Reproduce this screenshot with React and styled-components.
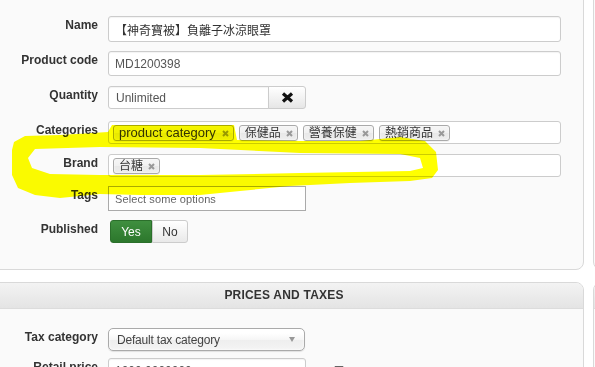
import React from "react";
import styled, { createGlobalStyle } from "styled-components";

const GlobalStyle = createGlobalStyle`
  body {
    margin: 0;
    background: #fff;
    overflow: hidden;
    font-family: "Liberation Sans", "Noto Sans CJK TC", Arial, sans-serif;
    color: #333;
  }
`;

const Screen = styled.div`
  position: relative;
  width: 595px;
  height: 367px;
  overflow: hidden;
`;

const Columns = styled.div`
  display: grid;
  grid-template-columns: 600px 300px;
  grid-template-rows: auto auto;
  column-gap: 9px;
  row-gap: 12px;
  margin-left: -16px;
  margin-top: -10px;
`;

const Panel = styled.section`
  box-sizing: border-box;
  background: #fafafa;
  border: 1px solid #d9d9d9;
  border-radius: 8px;
  padding: ${(p) => p.$pad || "0"};
`;

const PanelHeader = styled.header`
  height: 25px;
  line-height: 25px;
  border-radius: 7px 7px 0 0;
  border-bottom: 1px solid #dcdcdc;
  background: linear-gradient(#f3f3f3, #e4e4e4);
  text-align: center;
  font-size: 12px;
  font-weight: bold;
  letter-spacing: 0.2px;
  color: #333;
`;

const PanelBody = styled.div`
  padding: 19px 0 20px 0;
`;

const Row = styled.div`
  display: grid;
  grid-template-columns: 113px 1fr;
  column-gap: 10px;
  align-items: start;
  height: ${(p) => p.$h}px;
`;

const Label = styled.label`
  padding-top: 2px;
  text-align: right;
  font-size: 12px;
  line-height: 15px;
  font-weight: bold;
  color: #333;
`;

const TextBox = styled.div`
  box-sizing: border-box;
  display: flex;
  align-items: center;
  width: ${(p) => p.$w}px;
  height: ${(p) => p.$h || 25}px;
  padding: 0 6px;
  background: #fff;
  border: 1px solid ${(p) => (p.$square ? "#aaa" : "#ccc")};
  border-radius: ${(p) => (p.$square ? "0" : "3px")};
  box-shadow: ${(p) => (p.$square ? "none" : "inset 0 1px 1px rgba(0,0,0,0.05)")};
  font-size: 12px;
  color: ${(p) => (p.$muted ? "#555" : "#333")};
  white-space: nowrap;
`;

const Placeholder = styled.span`
  font-size: 11px;
  letter-spacing: 0.1px;
  color: #666;
`;

const Group = styled.div`
  display: flex;
  align-items: center;
`;

const GroupInput = styled(TextBox)`
  border-radius: 3px 0 0 3px;
  padding-left: 7px;
`;

const ClearButton = styled.button`
  box-sizing: border-box;
  width: 38px;
  height: 23px;
  display: flex;
  align-items: center;
  justify-content: center;
  padding: 0;
  margin-left: -1px;
  border: 1px solid #ccc;
  border-radius: 0 3px 3px 0;
  background: linear-gradient(#ffffff, #e6e6e6);
`;

const ChipBox = styled.div`
  box-sizing: border-box;
  display: flex;
  align-items: flex-start;
  gap: 5px;
  width: 453px;
  height: 23px;
  padding: 3px 4px;
  background: #fff;
  border: 1px solid #ccc;
  border-radius: 3px;
`;

const Chip = styled.span`
  box-sizing: border-box;
  display: inline-flex;
  align-items: center;
  gap: ${(p) => (p.$latin ? 6 : 5)}px;
  height: 16px;
  padding: 0 4px 0 5px;
  border: 1px solid #aaa;
  border-radius: 3px;
  background: linear-gradient(#f4f4f4 20%, #f0f0f0 50%, #e8e8e8 52%, #eeeeee);
  box-shadow: 0 0 2px #fff inset, 0 1px 0 rgba(0, 0, 0, 0.05);
  font-size: ${(p) => (p.$latin ? 13 : 12)}px;
  line-height: 14px;
  color: #333;
  white-space: nowrap;
`;

const Toggle = styled.div`
  display: flex;
  margin-left: 2px;
  height: 23px;
`;

const ToggleButton = styled.span`
  box-sizing: border-box;
  display: flex;
  align-items: center;
  justify-content: center;
  width: ${(p) => p.$w}px;
  height: 23px;
  font-size: 12px;
  border: 1px solid ${(p) => (p.$on ? "#2b6f2b" : "#ccc")};
  border-radius: ${(p) => (p.$first ? "3px 0 0 3px" : "0 3px 3px 0")};
  background: ${(p) =>
    p.$on ? "linear-gradient(#3f8f3f, #2c772c)" : "linear-gradient(#ffffff, #e9e9e9)"};
  color: ${(p) => (p.$on ? "#fff" : "#333")};
`;

const Select = styled.div`
  box-sizing: border-box;
  display: flex;
  align-items: center;
  justify-content: space-between;
  width: 197px;
  height: 23px;
  padding: 0 9px 0 8px;
  border: 1px solid #aaa;
  border-radius: 5px;
  background: linear-gradient(#ffffff 20%, #f6f6f6 50%, #eeeeee 52%, #f4f4f4);
  box-shadow: 0 0 3px #fff inset, 0 1px 1px rgba(0, 0, 0, 0.1);
  font-size: 12px;
  letter-spacing: -0.2px;
  color: #444;
`;

const Caret = styled.span`
  width: 0;
  height: 0;
  border-left: 3px solid transparent;
  border-right: 3px solid transparent;
  border-top: 5px solid #999;
`;

const Unit = styled.span`
  margin-left: 27px;
  font-size: 12px;
  color: #333;
`;

/* highlighter marks on top of the screenshot: multiply keeps text readable */
const Annotation = styled.svg`
  position: absolute;
  left: 0;
  top: 0;
  pointer-events: none;
  mix-blend-mode: multiply;
`;

const CloseX = () => (
  <svg width="7" height="7" viewBox="0 0 7 7">
    <path d="M1 1L6 6M6 1L1 6" stroke="#999" strokeWidth="2" />
  </svg>
);

const BigX = () => (
  <svg width="13" height="11" viewBox="0 0 13 11">
    <path d="M2 1.5L11 9.5M11 1.5L2 9.5" stroke="#111" strokeWidth="3.2" />
  </svg>
);

const categories = ["product category", "保健品", "營養保健", "熱銷商品"];

const outer =
  "M14 142 L25 136 L60 135 L108 132 L112 125 L234 125 L237 140 L300 141 L360 141 L400 137 L425 141 L436 152 L438 170 L432 178 L410 181 L350 183 L290 186 L240 191 L200 195 L140 195 L100 194 L60 198 L35 195 L18 188 L12 175 L12 150 Z";
const inner =
  "M35 149 L100 147 L200 148 L300 153 L400 154 L420 158 L423 168 L410 171 L300 173 L200 175 L100 175 L50 174 L32 168 L28 158 Z";

export default function App() {
  return (
    <Screen>
      <GlobalStyle />
      <Columns>
        <Panel $pad="25px 0 26px 0">
          <Row $h={35}>
            <Label>Name</Label>
            <TextBox $w={453} $h={26}>【神奇寶被】負離子冰涼眼罩</TextBox>
          </Row>
          <Row $h={35}>
            <Label>Product code</Label>
            <TextBox $w={453} $muted>MD1200398</TextBox>
          </Row>
          <Row $h={35}>
            <Label>Quantity</Label>
            <Group>
              <GroupInput $w={161} $h={23} $muted>Unlimited</GroupInput>
              <ClearButton>
                <BigX />
              </ClearButton>
            </Group>
          </Row>
          <Row $h={33}>
            <Label>Categories</Label>
            <ChipBox>
              {categories.map((c) => (
                <Chip key={c} $latin={/^[a-z ]+$/.test(c)}>
                  {c}
                  <CloseX />
                </Chip>
              ))}
            </ChipBox>
          </Row>
          <Row $h={32}>
            <Label>Brand</Label>
            <ChipBox>
              <Chip>
                台糖
                <CloseX />
              </Chip>
            </ChipBox>
          </Row>
          <Row $h={34}>
            <Label>Tags</Label>
            <TextBox $w={198} $square>
              <Placeholder>Select some options</Placeholder>
            </TextBox>
          </Row>
          <Row $h={23}>
            <Label>Published</Label>
            <Toggle>
              <ToggleButton $w={42} $on $first>Yes</ToggleButton>
              <ToggleButton $w={36}>No</ToggleButton>
            </Toggle>
          </Row>
        </Panel>
        <Panel />
        <Panel>
          <PanelHeader>PRICES AND TAXES</PanelHeader>
          <PanelBody>
            <Row $h={30}>
              <Label>Tax category</Label>
              <Select>
                Default tax category
                <Caret />
              </Select>
            </Row>
            <Row $h={30}>
              <Label>Retail price</Label>
              <Group>
                <TextBox $w={198} $muted>1000.0000000</TextBox>
                <Unit>元 TWD</Unit>
              </Group>
            </Row>
          </PanelBody>
        </Panel>
        <Panel>
          <PanelHeader />
        </Panel>
      </Columns>
      <Annotation width="595" height="367" viewBox="0 0 595 367">
        <path d={`${outer} ${inner}`} fill="#ffff00" fillRule="evenodd" />
      </Annotation>
    </Screen>
  );
}
